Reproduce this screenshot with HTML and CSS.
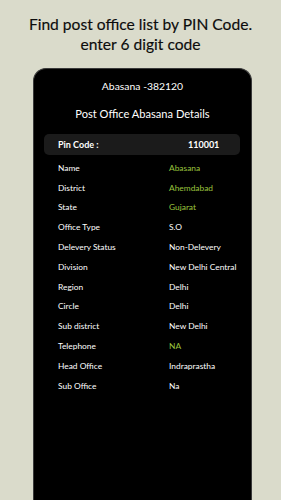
FILE: index.html
```html
<html>
    <head>
        <meta charset="utf-8">
        <title>Post Office Details</title>
        <link rel="stylesheet" href="styles.css">
    </head>
    <body>
        <h1 id="headline">Find post office list by PIN Code.<br>enter 6 digit code</h1>

        <div id="phone">
            <h2 id="office-title">Abasana -382120</h2>
            <h3 id="details-title">Post Office Abasana Details</h3>

            <div id="pin-box">
                <span class="pin-label">Pin Code :</span>
                <span class="pin-value">110001</span>
            </div>

            <ul id="details">
                <li><span class="label">Name</span><span class="value green">Abasana</span></li>
                <li><span class="label">District</span><span class="value green">Ahemdabad</span></li>
                <li><span class="label">State</span><span class="value green">Gujarat</span></li>
                <li><span class="label">Office Type</span><span class="value">S.O</span></li>
                <li><span class="label">Delevery Status</span><span class="value">Non-Delevery</span></li>
                <li><span class="label">Division</span><span class="value">New Delhi Central</span></li>
                <li><span class="label">Region</span><span class="value">Delhi</span></li>
                <li><span class="label">Circle</span><span class="value">Delhi</span></li>
                <li><span class="label">Sub district</span><span class="value">New Delhi</span></li>
                <li><span class="label">Telephone</span><span class="value green">NA</span></li>
                <li><span class="label">Head Office</span><span class="value">Indraprastha</span></li>
                <li><span class="label">Sub Office</span><span class="value">Na</span></li>
            </ul>
        </div>
    </body>
</html>
```

FILE: styles.css
```css
* {
    font-family: Lato, "Open Sans", sans-serif;
    box-sizing: border-box;
}

html, body {
    height: 100%;
}

body {
    margin: 0;
    background-color: #dadbcb;
    display: flex;
    flex-direction: column;
    overflow: hidden;
}

#headline {
    margin: 0;
    padding: 14px 0 0;
    text-align: center;
    font-size: 15.6px;
    line-height: 20px;
    font-weight: 400;
    color: #0c0c0c;
    -webkit-text-stroke: 0.15px #0c0c0c;
}

#phone {
    flex-grow: 1;
    margin: 14px 29px 0 33px;
    background-color: #000;
    border: 1px solid #3a3a3a;
    border-bottom: none;
    border-radius: 13px 13px 0 0;
    color: #fff;
    padding: 0 10px;
}

#office-title {
    margin: 9px 0 0;
    text-align: center;
    font-size: 10.4px;
    line-height: 16px;
    font-weight: 400;
}

#details-title {
    margin: 12px 0 0;
    text-align: center;
    font-size: 11.1px;
    line-height: 16px;
    font-weight: 400;
}

#pin-box {
    display: flex;
    align-items: center;
    height: 21px;
    margin: 12px 1px 0 0;
    padding: 0 14px;
    background-color: #1b1b1b;
    border-radius: 5px;
    font-size: 9px;
    font-weight: 700;
}

.pin-label {
    flex-grow: 1;
}

.pin-value {
    width: 38px;
}

#details {
    list-style: none;
    margin: 3px 0 0;
    padding: 0 0 0 14px;
}

#details li {
    display: flex;
    height: 19.8px;
    align-items: center;
    font-size: 8.4px;
}

#details .label {
    width: 111px;
}

#details .green {
    color: #9bc53d;
}
```
